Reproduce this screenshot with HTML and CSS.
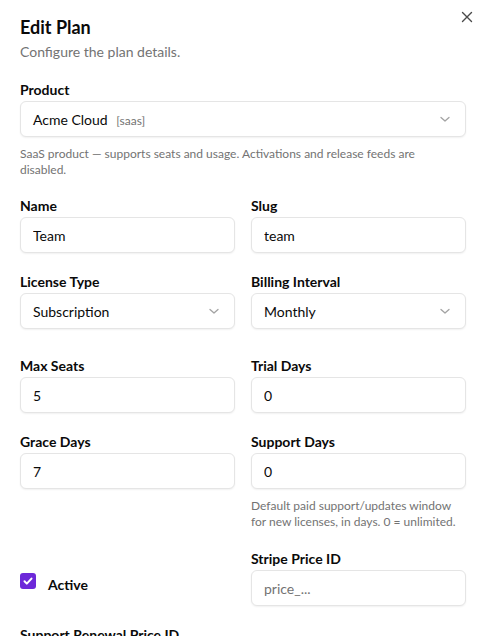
FILE: index.html
```html
<!DOCTYPE html>
<html lang="en">
<head>
<meta charset="utf-8">
<title>Edit Plan</title>
<link rel="stylesheet" href="styles.css">
</head>
<body>
<div class="dialog">
  <button class="close" aria-label="Close">
    <svg width="12" height="12" viewBox="0 0 12 12" fill="none" stroke="currentColor" stroke-width="1.4" stroke-linecap="round"><path d="M1.5 1.5l9 9M10.5 1.5l-9 9"/></svg>
  </button>
  <header class="head">
    <h2 class="title">Edit Plan</h2>
    <p class="subtitle">Configure the plan details.</p>
  </header>

  <form class="form">
    <div class="field">
      <label class="label">Product</label>
      <div class="control select">
        <span class="value">Acme Cloud <span class="tag">[saas]</span></span>
        <svg class="chev" width="12" height="8" viewBox="0 0 12 8" fill="none" stroke="currentColor" stroke-width="1.3" stroke-linecap="round" stroke-linejoin="round"><path d="M2 2.5l4 3.5 4-3.5"/></svg>
      </div>
      <p class="help help-product">SaaS product — supports seats and usage. Activations and release feeds are disabled.</p>
    </div>

    <div class="grid">
      <div class="field">
        <label class="label">Name</label>
        <input class="control" value="Team">
      </div>
      <div class="field">
        <label class="label">Slug</label>
        <input class="control" value="team">
      </div>
    </div>

    <div class="grid">
      <div class="field">
        <label class="label">License Type</label>
        <div class="control select">
          <span class="value">Subscription</span>
          <svg class="chev" width="12" height="8" viewBox="0 0 12 8" fill="none" stroke="currentColor" stroke-width="1.3" stroke-linecap="round" stroke-linejoin="round"><path d="M2 2.5l4 3.5 4-3.5"/></svg>
        </div>
      </div>
      <div class="field">
        <label class="label">Billing Interval</label>
        <div class="control select">
          <span class="value">Monthly</span>
          <svg class="chev" width="12" height="8" viewBox="0 0 12 8" fill="none" stroke="currentColor" stroke-width="1.3" stroke-linecap="round" stroke-linejoin="round"><path d="M2 2.5l4 3.5 4-3.5"/></svg>
        </div>
      </div>
    </div>

    <div class="grid section">
      <div class="field">
        <label class="label">Max Seats</label>
        <input class="control" value="5">
      </div>
      <div class="field">
        <label class="label">Trial Days</label>
        <input class="control" value="0">
      </div>
    </div>

    <div class="grid">
      <div class="field">
        <label class="label">Grace Days</label>
        <input class="control" value="7">
      </div>
      <div class="field">
        <label class="label">Support Days</label>
        <input class="control" value="0">
        <p class="help">Default paid support/updates window for new licenses, in days. 0 = unlimited.</p>
      </div>
    </div>

    <div class="grid">
      <div class="check-row">
        <span class="checkbox">
          <svg width="12" height="12" viewBox="0 0 12 12" fill="none" stroke="#fff" stroke-width="2" stroke-linecap="round" stroke-linejoin="round"><path d="M2.5 6.3l2.3 2.3 4.7-5"/></svg>
        </span>
        <span class="check-label">Active</span>
      </div>
      <div class="field">
        <label class="label">Stripe Price ID</label>
        <input class="control" placeholder="price_...">
      </div>
    </div>

    <div class="field">
      <label class="label">Support Renewal Price ID</label>
      <input class="control" placeholder="price_...">
    </div>
  </form>
</div>
</body>
</html>
```

FILE: styles.css
```css
* { box-sizing: border-box; }

html, body {
  margin: 0;
  background: #ffffff;
}

body {
  font-family: Lato, "Noto Sans", sans-serif;
  color: #0a0a0a;
  overflow: hidden;
}

.dialog {
  position: relative;
  padding: 15px 24px 20px 20px;
}

.close {
  position: absolute;
  top: 11px;
  right: 17px;
  width: 12px;
  height: 12px;
  padding: 0;
  border: 0;
  background: none;
  color: #4a4a4a;
  display: flex;
}

.head {
  display: flex;
  flex-direction: column;
  gap: 4px;
}

.title {
  margin: 0;
  font-size: 18px;
  line-height: 24px;
  font-weight: 700;
}

.subtitle {
  margin: 0;
  font-size: 14px;
  line-height: 18px;
  color: #737373;
}

.form {
  margin-top: 19px;
  display: flex;
  flex-direction: column;
  gap: 19px;
}

.field {
  display: flex;
  flex-direction: column;
  min-width: 0;
}

.label {
  font-size: 14px;
  line-height: 20px;
  font-weight: 700;
  margin-bottom: 1px;
}

.control {
  height: 36px;
  width: 100%;
  border: 1px solid #e5e5e5;
  border-radius: 6px;
  background: #fff;
  box-shadow: 0 1px 2px rgba(0, 0, 0, 0.06);
  padding: 0 12px;
  font-family: Lato, "Noto Sans", sans-serif;
  font-size: 14px;
  color: #0a0a0a;
  outline: none;
}

.control::placeholder {
  color: #737373;
}

.select {
  display: flex;
  align-items: center;
  justify-content: space-between;
  padding-right: 14px;
}

.value {
  white-space: nowrap;
}

.tag {
  margin-left: 5px;
  font-size: 12px;
  color: #737373;
}

.chev {
  color: #a3a3a3;
}

.help {
  margin: 9px 0 0;
  font-size: 12px;
  line-height: 16px;
  color: #737373;
}

.help-product {
  max-width: 420px;
  margin-bottom: -1px;
}

.grid {
  display: grid;
  grid-template-columns: 1fr 1fr;
  column-gap: 16px;
}

.section {
  margin-top: 8px;
}

.check-row {
  align-self: end;
  display: flex;
  align-items: center;
  gap: 12px;
  height: 36px;
  padding-bottom: 7px;
}

.checkbox {
  width: 16px;
  height: 16px;
  border-radius: 3px;
  background: #6d28d9;
  display: flex;
  align-items: center;
  justify-content: center;
  position: relative;
  top: -4px;
}

.check-label {
  font-size: 14px;
  font-weight: 700;
}
```
